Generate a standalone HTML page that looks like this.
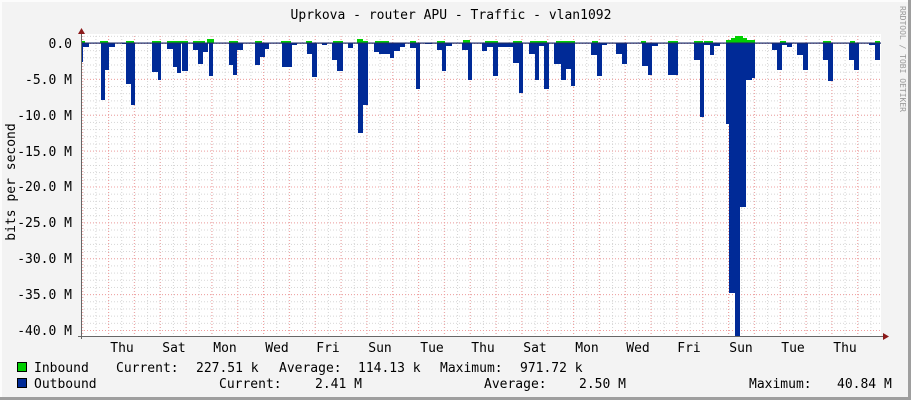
<!DOCTYPE html>
<html><head><meta charset="utf-8"><style>
html,body{margin:0;padding:0;background:#f3f3f3;}
svg{display:block;}
text{font-family:"DejaVu Sans Mono","Liberation Mono",monospace;fill:#000;}
</style></head><body>
<svg width="911" height="400" viewBox="0 0 911 400" xmlns="http://www.w3.org/2000/svg">
<defs>
<pattern id="hmin" x="0" y="43" width="911" height="7.175" patternUnits="userSpaceOnUse"><line x1="0" y1="0.5" x2="911" y2="0.5" stroke="#d4d4d4" stroke-width="1" stroke-dasharray="1,2"/></pattern>
<pattern id="vmin" x="95.4" y="0" width="12.917" height="400" patternUnits="userSpaceOnUse"><line x1="0.5" y1="0" x2="0.5" y2="400" stroke="#d4d4d4" stroke-width="1" stroke-dasharray="1,2"/></pattern>
<pattern id="hmaj" x="0" y="43" width="911" height="35.875" patternUnits="userSpaceOnUse"><line x1="0" y1="0.5" x2="911" y2="0.5" stroke="#f2a0a0" stroke-width="1" stroke-dasharray="1,2"/></pattern>
<pattern id="vmaj" x="108" y="0" width="25.833" height="400" patternUnits="userSpaceOnUse"><line x1="0.5" y1="0" x2="0.5" y2="400" stroke="#f2a0a0" stroke-width="1" stroke-dasharray="1,2"/></pattern>
</defs>
<rect x="0" y="0" width="911" height="400" fill="#f3f3f3"/>
<rect x="0" y="0" width="911" height="2" fill="#fcfcfc"/>
<rect x="0" y="0" width="2" height="400" fill="#fcfcfc"/>
<rect x="908" y="0" width="3" height="400" fill="#9e9e9e"/>
<rect x="0" y="397" width="911" height="3" fill="#9e9e9e"/>
<rect x="81" y="34" width="800" height="302" fill="#fff"/>
<rect x="81" y="34" width="800" height="302" fill="url(#hmin)"/>
<rect x="81" y="34" width="800" height="302" fill="url(#vmin)"/>
<rect x="81" y="34" width="800" height="302" fill="url(#hmaj)"/>
<rect x="81" y="34" width="800" height="302" fill="url(#vmaj)"/>
<g fill="#00cf00">
<rect x="81" y="41" width="4" height="2"/><rect x="100" y="41" width="8" height="2"/><rect x="126" y="41" width="8" height="2"/><rect x="152" y="41" width="9" height="2"/><rect x="167" y="41" width="21" height="2"/><rect x="193" y="41" width="12" height="2"/><rect x="207" y="39" width="7" height="4"/><rect x="229" y="41" width="9" height="2"/><rect x="255" y="41" width="7" height="2"/><rect x="281" y="41" width="10" height="2"/><rect x="306" y="41" width="6" height="2"/><rect x="333" y="41" width="10" height="2"/><rect x="357" y="39" width="6" height="4"/><rect x="363" y="41" width="5" height="2"/><rect x="375" y="41" width="14" height="2"/><rect x="410" y="41" width="6" height="2"/><rect x="437" y="41" width="8" height="2"/><rect x="463" y="40" width="7" height="3"/><rect x="485" y="41" width="13" height="2"/><rect x="513" y="41" width="9" height="2"/><rect x="530" y="41" width="17" height="2"/><rect x="556" y="41" width="19" height="2"/><rect x="592" y="41" width="6" height="2"/><rect x="641" y="41" width="5" height="2"/><rect x="668" y="41" width="10" height="2"/><rect x="694" y="41" width="9" height="2"/><rect x="704" y="41" width="9" height="2"/><rect x="726" y="40" width="29" height="3"/><rect x="731" y="38" width="16" height="5"/><rect x="735" y="36" width="8" height="7"/><rect x="780" y="41" width="6" height="2"/><rect x="823" y="41" width="8" height="2"/><rect x="850" y="41" width="5" height="2"/><rect x="875" y="41" width="5" height="2"/>
</g>
<g fill="#002a97">
<rect x="81" y="43" width="2" height="19"/><rect x="83" y="43" width="6" height="4"/><rect x="101" y="43" width="4" height="57"/><rect x="105" y="43" width="4" height="27"/><rect x="109" y="43" width="6" height="4"/><rect x="122" y="43" width="4" height="1"/><rect x="126" y="43" width="5" height="41"/><rect x="131" y="43" width="4" height="62"/><rect x="152" y="43" width="6" height="29"/><rect x="158" y="43" width="3" height="37"/><rect x="167" y="43" width="6" height="6"/><rect x="173" y="43" width="4" height="24"/><rect x="177" y="43" width="4" height="30"/><rect x="182" y="43" width="6" height="28"/><rect x="193" y="43" width="5" height="7"/><rect x="198" y="43" width="5" height="21"/><rect x="203" y="43" width="5" height="9"/><rect x="209" y="43" width="4" height="33"/><rect x="229" y="43" width="4" height="22"/><rect x="233" y="43" width="4" height="32"/><rect x="237" y="43" width="6" height="7"/><rect x="255" y="43" width="5" height="22"/><rect x="260" y="43" width="5" height="14"/><rect x="265" y="43" width="4" height="6"/><rect x="282" y="43" width="10" height="24"/><rect x="292" y="43" width="5" height="2"/><rect x="307" y="43" width="5" height="11"/><rect x="312" y="43" width="5" height="34"/><rect x="322" y="43" width="5" height="2"/><rect x="332" y="43" width="5" height="17"/><rect x="337" y="43" width="6" height="28"/><rect x="348" y="43" width="5" height="5"/><rect x="358" y="43" width="5" height="90"/><rect x="363" y="43" width="5" height="62"/><rect x="374" y="43" width="5" height="9"/><rect x="379" y="43" width="11" height="11"/><rect x="390" y="43" width="4" height="15"/><rect x="394" y="43" width="6" height="8"/><rect x="400" y="43" width="5" height="4"/><rect x="410" y="43" width="6" height="5"/><rect x="416" y="43" width="4" height="46"/><rect x="425" y="43" width="7" height="1"/><rect x="437" y="43" width="5" height="7"/><rect x="442" y="43" width="4" height="28"/><rect x="446" y="43" width="6" height="3"/><rect x="462" y="43" width="6" height="7"/><rect x="468" y="43" width="4" height="37"/><rect x="482" y="43" width="5" height="8"/><rect x="487" y="43" width="6" height="4"/><rect x="493" y="43" width="5" height="33"/><rect x="498" y="43" width="15" height="4"/><rect x="513" y="43" width="6" height="20"/><rect x="519" y="43" width="4" height="50"/><rect x="529" y="43" width="6" height="11"/><rect x="535" y="43" width="4" height="37"/><rect x="539" y="43" width="5" height="3"/><rect x="544" y="43" width="5" height="46"/><rect x="554" y="43" width="7" height="21"/><rect x="561" y="43" width="5" height="37"/><rect x="566" y="43" width="5" height="26"/><rect x="571" y="43" width="4" height="43"/><rect x="591" y="43" width="6" height="12"/><rect x="597" y="43" width="5" height="33"/><rect x="602" y="43" width="5" height="2"/><rect x="616" y="43" width="6" height="11"/><rect x="622" y="43" width="5" height="21"/><rect x="642" y="43" width="6" height="23"/><rect x="648" y="43" width="4" height="32"/><rect x="652" y="43" width="6" height="3"/><rect x="668" y="43" width="10" height="32"/><rect x="694" y="43" width="6" height="17"/><rect x="700" y="43" width="4" height="74"/><rect x="704" y="43" width="6" height="2"/><rect x="710" y="43" width="4" height="12"/><rect x="714" y="43" width="6" height="3"/><rect x="726" y="43" width="3" height="81"/><rect x="729" y="43" width="6" height="250"/><rect x="735" y="43" width="5" height="294"/><rect x="740" y="43" width="6" height="164"/><rect x="746" y="43" width="6" height="37"/><rect x="752" y="43" width="3" height="35"/><rect x="772" y="43" width="5" height="7"/><rect x="777" y="43" width="5" height="27"/><rect x="782" y="43" width="5" height="2"/><rect x="787" y="43" width="5" height="4"/><rect x="797" y="43" width="6" height="12"/><rect x="803" y="43" width="5" height="27"/><rect x="823" y="43" width="5" height="17"/><rect x="828" y="43" width="5" height="38"/><rect x="849" y="43" width="5" height="17"/><rect x="854" y="43" width="5" height="27"/><rect x="869" y="43" width="6" height="2"/><rect x="875" y="43" width="5" height="17"/>
</g>
<rect x="81" y="42.5" width="800" height="1.2" fill="#1a2a6a"/>
<!-- axes -->
<line x1="81.5" y1="33" x2="81.5" y2="339" stroke="#666" stroke-width="1"/>
<line x1="78" y1="336.5" x2="884" y2="336.5" stroke="#666" stroke-width="1"/>
<polygon points="81.5,28 78,34 85,34" fill="#8b1a1a"/>
<polygon points="889,336.5 883,333 883,340" fill="#8b1a1a"/>
<!-- y labels -->
<g font-size="13" text-anchor="end">
<text x="72" y="48">0.0</text>
<text x="72" y="84">-5.0 M</text>
<text x="72" y="120">-10.0 M</text>
<text x="72" y="156">-15.0 M</text>
<text x="72" y="191">-20.0 M</text>
<text x="72" y="227">-25.0 M</text>
<text x="72" y="263">-30.0 M</text>
<text x="72" y="299">-35.0 M</text>
<text x="72" y="335">-40.0 M</text>
</g>
<text font-size="13" transform="translate(15,182) rotate(-90)" text-anchor="middle">bits per second</text>
<!-- x labels -->
<g font-size="13" text-anchor="middle">
<text x="122" y="352">Thu</text><text x="174" y="352">Sat</text><text x="225" y="352">Mon</text><text x="277" y="352">Wed</text><text x="328" y="352">Fri</text><text x="380" y="352">Sun</text><text x="432" y="352">Tue</text><text x="483" y="352">Thu</text><text x="535" y="352">Sat</text><text x="587" y="352">Mon</text><text x="638" y="352">Wed</text><text x="689" y="352">Fri</text><text x="741" y="352">Sun</text><text x="793" y="352">Tue</text><text x="845" y="352">Thu</text>
</g>
<text font-size="13" x="451" y="19" text-anchor="middle">Uprkova - router APU - Traffic - vlan1092</text>
<text font-size="8" fill="#999" style="fill:#999" transform="translate(900,6) rotate(90)">RRDTOOL / TOBI OETIKER</text>
<!-- legend -->
<rect x="17.5" y="362.5" width="9" height="9" fill="#00cf00" stroke="#000"/>
<rect x="17.5" y="378.5" width="9" height="9" fill="#002a97" stroke="#000"/>
<g font-size="13">
<text x="34" y="372">Inbound</text>
<text x="116" y="372">Current:</text>
<text x="196" y="372">227.51 k</text>
<text x="279" y="372">Average:</text>
<text x="358" y="372">114.13 k</text>
<text x="440" y="372">Maximum:</text>
<text x="520" y="372">971.72 k</text>
<text x="34" y="388">Outbound</text>
<text x="219" y="388">Current:</text>
<text x="315" y="388">2.41 M</text>
<text x="484" y="388">Average:</text>
<text x="579" y="388">2.50 M</text>
<text x="749" y="388">Maximum:</text>
<text x="837" y="388">40.84 M</text>
</g>
</svg>
</body></html>
